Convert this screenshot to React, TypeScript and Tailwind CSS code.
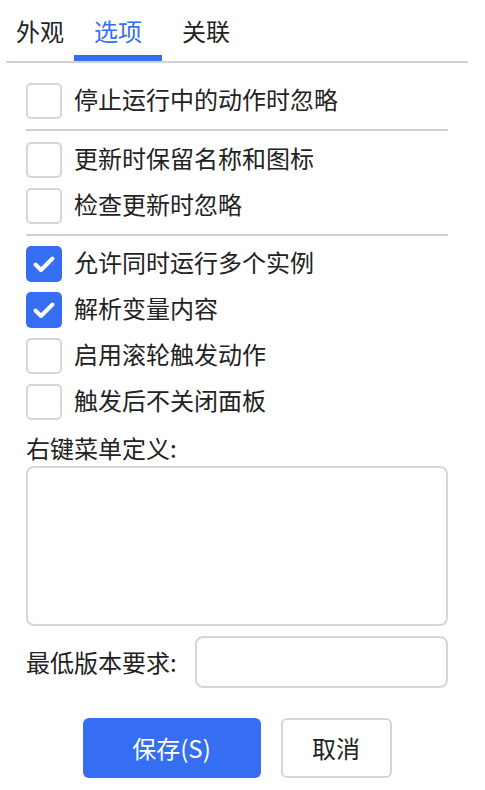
import React from "react";

const font = { fontFamily: '"Noto Sans CJK SC", "Noto Sans", sans-serif' };

function Check({ checked, label }: { checked?: boolean; label: string }) {
  return (
    <div className="flex h-[36px] items-center">
      {checked ? (
        <div className="flex h-[36px] w-[36px] items-center justify-center rounded-[5px] bg-[#356ef2]">
          <svg width="36" height="36" viewBox="0 0 36 36">
            <path d="M9.5 18.5 L15 24 L26.5 12.5" fill="none" stroke="#fff" strokeWidth="4" strokeLinecap="round" strokeLinejoin="round" />
          </svg>
        </div>
      ) : (
        <div className="h-[36px] w-[36px] rounded-[5px] border-2 border-[#d3d6dc] bg-white" />
      )}
      <span className="ml-[12px] text-[24px] leading-[36px] text-[#222] -translate-y-[2px]">{label}</span>
    </div>
  );
}

export default function App() {
  return (
    <div className="h-[790px] w-[485px] bg-white" style={font}>
      <div className="mx-[6px] flex w-[462px] border-b-2 border-[#cfd2d8]">
        <div className="h-[61px] border-b-[6px] border-transparent pl-[10px] pr-[10px] pt-[15px] text-[24px] leading-[32px] text-[#222]">外观</div>
        <div className="h-[61px] border-b-[6px] border-[#356ef2] px-[20px] pt-[15px] text-[24px] leading-[32px] text-[#356ef2]">选项</div>
        <div className="h-[61px] border-b-[6px] border-transparent px-[20px] pt-[15px] text-[24px] leading-[32px] text-[#222]">关联</div>
      </div>
      <div className="ml-[26px] w-[422px] pt-[20px]">
        <Check label="停止运行中的动作时忽略" />
        <div className="mt-[10px] h-[2px] bg-[#cfd2d8]" />
        <div className="mt-[11px] flex flex-col gap-[10px]">
          <Check label="更新时保留名称和图标" />
          <Check label="检查更新时忽略" />
        </div>
        <div className="mt-[10px] h-[2px] bg-[#cfd2d8]" />
        <div className="mt-[10px] flex flex-col gap-[10px]">
          <Check checked label="允许同时运行多个实例" />
          <Check checked label="解析变量内容" />
          <Check label="启用滚轮触发动作" />
          <Check label="触发后不关闭面板" />
        </div>
        <div className="mt-[10px] h-[36px] text-[24px] leading-[36px] text-[#222]">右键菜单定义:</div>
        <textarea className="block h-[160px] w-[422px] resize-none rounded-[8px] border-2 border-[#d3d6dc] outline-none" />
        <div className="mt-[10px] flex h-[52px] items-center">
          <span className="text-[24px] leading-[36px] text-[#222]">最低版本要求:</span>
          <input className="ml-auto h-[52px] w-[253px] rounded-[8px] border-2 border-[#d3d6dc] outline-none" />
        </div>
        <div className="mt-[30px] flex justify-center gap-[20px]">
          <button className="h-[60px] w-[178px] rounded-[6px] bg-[#356ef2] text-[24px] text-white">保存(S)</button>
          <button className="h-[60px] w-[111px] rounded-[6px] border-2 border-[#d3d6dc] bg-white text-[24px] text-[#222]">取消</button>
        </div>
      </div>
    </div>
  );
}
